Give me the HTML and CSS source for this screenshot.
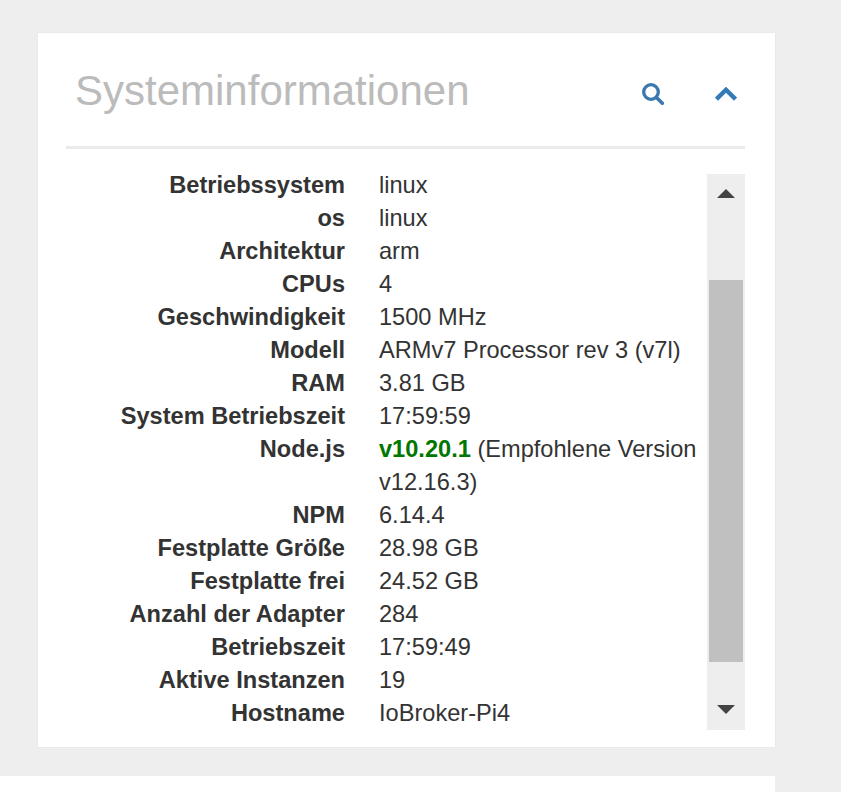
FILE: index.html
```html
<!DOCTYPE html>
<html lang="de">
<head>
<meta charset="utf-8">
<title>Systeminformationen</title>
<link rel="stylesheet" href="styles.css">
</head>
<body>
<section class="card">
  <header class="card-header">
    <h2 class="card-title">Systeminformationen</h2>
    <div class="card-tools">
      <svg class="icon icon-search" viewBox="0 0 22 22" width="22" height="22" aria-hidden="true">
        <circle cx="9" cy="9" r="7.300" fill="none" stroke="#3a78ad" stroke-width="3.300"/>
        <path d="M14.500 14.500l5.800 5.800" fill="none" stroke="#3a78ad" stroke-width="3.600" stroke-linecap="round"/>
      </svg>
      <svg class="icon icon-chevron" viewBox="0 0 22 14" width="22" height="14" aria-hidden="true">
        <path d="M1.500 12.200L11 2.800l9.500 9.400" fill="none" stroke="#337ab7" stroke-width="4.400"/>
      </svg>
    </div>
  </header>
  <div class="card-body">
    <table class="info">
      <tbody>
        <tr><th>Betriebssystem</th><td>linux</td></tr>
        <tr><th>os</th><td>linux</td></tr>
        <tr><th>Architektur</th><td>arm</td></tr>
        <tr><th>CPUs</th><td>4</td></tr>
        <tr><th>Geschwindigkeit</th><td>1500 MHz</td></tr>
        <tr><th>Modell</th><td>ARMv7 Processor rev 3 (v7l)</td></tr>
        <tr><th>RAM</th><td>3.81 GB</td></tr>
        <tr><th>System Betriebszeit</th><td>17:59:59</td></tr>
        <tr><th>Node.js</th><td><strong class="ok">v10.20.1</strong> (Empfohlene Version v12.16.3)</td></tr>
        <tr><th>NPM</th><td>6.14.4</td></tr>
        <tr><th>Festplatte Größe</th><td>28.98 GB</td></tr>
        <tr><th>Festplatte frei</th><td>24.52 GB</td></tr>
        <tr><th>Anzahl der Adapter</th><td>284</td></tr>
        <tr><th>Betriebszeit</th><td>17:59:49</td></tr>
        <tr><th>Aktive Instanzen</th><td>19</td></tr>
        <tr><th>Hostname</th><td>IoBroker-Pi4</td></tr>
      </tbody>
    </table>
    <div class="scrollbar" aria-hidden="true">
      <svg class="arrow arrow-up" viewBox="0 0 18 9" width="18" height="9"><path d="M9 0l9 9H0z" fill="#444"/></svg>
      <div class="thumb"></div>
      <svg class="arrow arrow-down" viewBox="0 0 18 9" width="18" height="9"><path d="M0 0h18L9 9z" fill="#444"/></svg>
    </div>
  </div>
</section>
<section class="card-next"></section>
</body>
</html>
```

FILE: styles.css
```css
* {
  box-sizing: border-box;
}

html,
body {
  margin: 0;
  height: 100%;
  overflow: hidden;
}

body {
  background: #eeeeee;
  font-family: "Liberation Sans", Arial, sans-serif;
  color: #333333;
  padding-top: 33px;
}

.card {
  width: 737px;
  height: 714px;
  margin-left: 38px;
  background: #ffffff;
  box-shadow: 0 0 1px rgba(0, 0, 0, 0.12);
  padding: 0 30px 0 28px;
}

.card-header {
  height: 116px;
  border-bottom: 3px solid #ebebeb;
  display: flex;
  align-items: flex-start;
  justify-content: space-between;
  padding: 34px 8px 0 9px;
}

.card-title {
  margin: 0;
  font-size: 42px;
  line-height: 48px;
  font-weight: 400;
  color: #bbbbbb;
}

.card-tools {
  display: flex;
  align-items: center;
  gap: 51px;
  padding-top: 16px;
}

.card-body {
  display: flex;
  align-items: flex-start;
  height: 561px;
  margin-top: 20px;
  overflow: hidden;
}

.info {
  width: 641px;
  flex: none;
  border-collapse: collapse;
  font-size: 23.6px;
  line-height: 33px;
}

.info th,
.info td {
  padding: 0;
  vertical-align: top;
}

.info th {
  width: 279px;
  text-align: right;
  font-weight: 700;
}

.info td {
  padding-left: 34px;
  padding-right: 8px;
}

.ok {
  color: #007700;
}

.scrollbar {
  width: 38px;
  height: 556px;
  margin-top: 5px;
  flex: none;
  background: #eeeeee;
  display: flex;
  flex-direction: column;
  align-items: center;
}

.arrow {
  display: block;
  flex: none;
}

.arrow-up {
  margin-top: 15px;
}

.thumb {
  width: 34px;
  height: 382px;
  margin-top: 82px;
  background: #c0c0c0;
  flex: none;
}

.arrow-down {
  margin-top: 43px;
}

.card-next {
  height: 40px;
  margin-top: 29px;
  width: 775px;
  background: #ffffff;
}
```
